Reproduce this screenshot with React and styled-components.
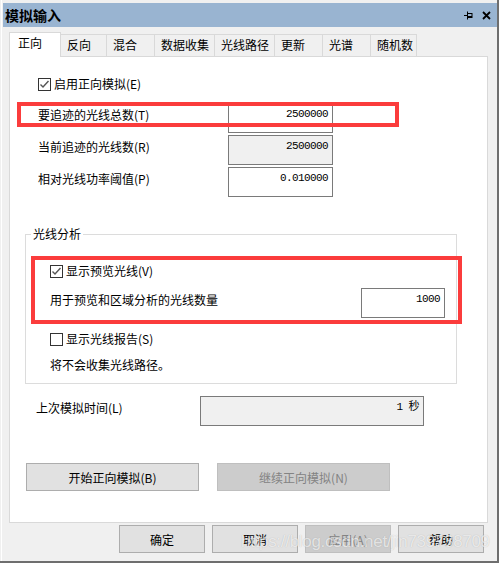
import React from 'react';
import styled, { createGlobalStyle } from 'styled-components';

const FONT = `"Noto Sans CJK SC", "Noto Sans", sans-serif`;
const MONO = `"Liberation Mono", "Noto Sans CJK SC", monospace`;

const Global = createGlobalStyle`
  html, body { margin: 0; padding: 0; background: #f0f0f0; }
  body { font-family: ${FONT}; font-size: 12px; color: #000; }
  * { box-sizing: border-box; }
`;

const Window = styled.div`
  position: relative;
  width: 499px;
  height: 563px;
  background: #f0f0f0;
  border-right: 2px solid #6e6e6e;
  border-bottom: 2px solid #6e6e6e;
  box-shadow: inset 1px 0 0 #f0f0f0, inset 2px 0 0 #ffffff;
  display: flex;
  flex-direction: column;
  overflow: hidden;
`;

const TitleBar = styled.div`
  margin: 3px 0 0 3px;
  height: 24px;
  background: #99b4d1;
  display: flex;
  align-items: center;
  justify-content: space-between;
  padding: 0 6px 0 2px;
`;

const Title = styled.div`
  font-size: 14px;
  font-weight: bold;
  line-height: 24px;
`;

const TitleIcons = styled.div`
  display: flex;
  align-items: center;
  gap: 9px;
`;

const TabRow = styled.div`
  margin: 5px 0 -1px 9px;
  height: 25px;
  display: flex;
  align-items: flex-end;
  position: relative;
  z-index: 1;
`;

const Tab = styled.div`
  position: relative;
  width: ${p => p.$w}px;
  height: ${p => (p.$active ? 25 : 22)}px;
  margin-bottom: ${p => (p.$active ? 0 : 1)}px;
  margin-left: ${p => (p.$first ? 0 : -1)}px;
  z-index: ${p => (p.$active ? 2 : 1)};
  border: 1px solid #d9d9d9;
  border-bottom: none;
  background: ${p => (p.$active ? '#ffffff' : '#f0f0f0')};
  padding-left: ${p => (p.$active ? 8 : 6)}px;
  font-size: 12px;
  line-height: 20px;
  white-space: nowrap;
`;

const Panel = styled.div`
  position: relative;
  margin: 0 9px;
  height: 467px;
  border: 1px solid #d9d9d9;
  background: #ffffff;
  display: flex;
  flex-direction: column;
  align-items: flex-start;
`;

const CheckRow = styled.div`
  display: flex;
  align-items: center;
  height: 14px;
  gap: 3px;
  margin-top: ${p => p.$mt}px;
  margin-left: ${p => p.$ml}px;
  line-height: 14px;
`;

const Box = styled.span`
  width: 13px;
  height: 13px;
  border: 1px solid #333333;
  background: #ffffff;
  display: inline-flex;
  align-items: center;
  justify-content: center;
`;

const FieldRow = styled.div`
  display: flex;
  align-items: flex-start;
  align-self: stretch;
  margin-top: ${p => p.$mt}px;
  padding-left: ${p => p.$ml}px;
  padding-right: ${p => p.$mr || 0}px;
`;

const Label = styled.div`
  width: ${p => (p.$w ? `${p.$w}px` : 'auto')};
  flex: ${p => (p.$w ? '0 0 auto' : '1 1 auto')};
  padding-top: 4px;
  line-height: 16px;
  white-space: nowrap;
`;

const Edit = styled.div`
  width: ${p => p.$w}px;
  height: 30px;
  border: 1px solid #7a7a7a;
  background: ${p => (p.$disabled ? '#f0f0f0' : '#ffffff')};
  text-align: right;
  padding: 3px 4px 0 0;
  font-family: ${MONO};
  font-size: 11px;
  letter-spacing: -0.6px;
  line-height: 14px;
  white-space: nowrap;
`;

const Group = styled.fieldset`
  margin: 29px 0 0 15px;
  padding: 0 0 11px 0;
  width: 432px;
  border: 1px solid #dcdcdc;
  min-inline-size: 0;
  display: flex;
  flex-direction: column;
  align-items: flex-start;
`;

const Legend = styled.legend`
  margin-left: 5px;
  padding: 0 2px;
  line-height: 16px;
  font-size: 12px;
`;

const Note = styled.div`
  margin-top: 12px;
  margin-left: 24px;
  line-height: 14px;
`;

const ButtonRow = styled.div`
  display: flex;
  gap: 18px;
  margin-top: 37px;
  margin-left: 16px;
`;

const Button = styled.div`
  width: ${p => p.$w}px;
  height: 28px;
  border: 1px solid ${p => (p.$disabled ? '#bfbfbf' : '#adadad')};
  background: ${p => (p.$disabled ? '#cccccc' : '#e1e1e1')};
  color: ${p => (p.$disabled ? '#838383' : '#000000')};
  display: flex;
  align-items: center;
  justify-content: center;
  font-size: 12px;
  white-space: nowrap;
`;

const Footer = styled.div`
  display: flex;
  justify-content: flex-end;
  gap: 7px;
  margin-top: 2px;
  padding-right: 13px;
`;

const Highlight = styled.div`
  position: absolute;
  left: ${p => p.$x}px;
  top: ${p => p.$y}px;
  width: ${p => p.$w}px;
  height: ${p => p.$h}px;
  border: 4px solid #fb3c3c;
  pointer-events: none;
`;

const Watermark = styled.div`
  position: absolute;
  left: 241px;
  top: 532px;
  font-family: "Liberation Sans", Arial, sans-serif;
  font-size: 17px;
  line-height: 20px;
  letter-spacing: -0.3px;
  color: rgba(255, 255, 255, 0.7);
  text-shadow: 0 0 1px rgba(0, 0, 0, 0.22);
  white-space: nowrap;
  pointer-events: none;
`;

const Check = ({ checked }) => (
  <Box>
    {checked && (
      <svg width="11" height="11" viewBox="0 0 11 11">
        <path d="M1.5 5.5 L4 8 L9.5 2" stroke="#555" strokeWidth="1.4" fill="none" />
      </svg>
    )}
  </Box>
);

const PinIcon = () => (
  <svg width="9" height="9" viewBox="0 0 9 9">
    <path d="M0 4.5 H3" stroke="#000" strokeWidth="1" />
    <path d="M3.5 0.5 V8.5" stroke="#000" strokeWidth="1" />
    <rect x="3.5" y="2.5" width="4.5" height="4" fill="none" stroke="#000" strokeWidth="1" />
    <path d="M4 5.5 H8" stroke="#000" strokeWidth="1" />
  </svg>
);

const CloseIcon = () => (
  <svg width="9" height="9" viewBox="0 0 9 9">
    <path d="M1 1 L8 8 M8 1 L1 8" stroke="#000" strokeWidth="1.8" />
  </svg>
);

const tabs = [
  { t: '正向', w: 52 },
  { t: '反向', w: 47 },
  { t: '混合', w: 49 },
  { t: '数据收集', w: 61 },
  { t: '光线路径', w: 61 },
  { t: '更新', w: 49 },
  { t: '光谱', w: 49 },
  { t: '随机数', w: 47 },
];

export default function App() {
  return (
    <>
      <Global />
      <Window>
        <TitleBar>
          <Title>模拟输入</Title>
          <TitleIcons>
            <PinIcon />
            <CloseIcon />
          </TitleIcons>
        </TitleBar>

        <TabRow>
          {tabs.map((tb, i) => (
            <Tab key={tb.t} $w={tb.w} $active={i === 0} $first={i === 0}>
              {tb.t}
            </Tab>
          ))}
        </TabRow>

        <Panel>
          <CheckRow $mt={20} $ml={28}>
            <Check checked />
            <span>启用正向模拟(E)</span>
          </CheckRow>

          <FieldRow $mt={12} $ml={28}>
            <Label $w={190}>要追迹的光线总数(T)</Label>
            <Edit $w={105}>2500000</Edit>
          </FieldRow>
          <FieldRow $mt={2} $ml={28}>
            <Label $w={190}>当前追迹的光线数(R)</Label>
            <Edit $w={105} $disabled>2500000</Edit>
          </FieldRow>
          <FieldRow $mt={2} $ml={28}>
            <Label $w={190}>相对光线功率阈值(P)</Label>
            <Edit $w={105}>0.010000</Edit>
          </FieldRow>

          <Group>
            <Legend>光线分析</Legend>
            <CheckRow $mt={22} $ml={24}>
              <Check checked />
              <span>显示预览光线(V)</span>
            </CheckRow>
            <FieldRow $mt={10} $ml={24} $mr={11}>
              <Label>用于预览和区域分析的光线数量</Label>
              <Edit $w={84}>1000</Edit>
            </FieldRow>
            <CheckRow $mt={14} $ml={24}>
              <Check />
              <span>显示光线报告(S)</span>
            </CheckRow>
            <Note>将不会收集光线路径。</Note>
          </Group>

          <FieldRow $mt={12} $ml={26}>
            <Label $w={164}>上次模拟时间(L)</Label>
            <Edit $w={224} $disabled>1 秒</Edit>
          </FieldRow>

          <ButtonRow>
            <Button $w={173}>开始正向模拟(B)</Button>
            <Button $w={173} $disabled>继续正向模拟(N)</Button>
          </ButtonRow>

          <Highlight $x={7} $y={45} $w={382} $h={25} />
          <Highlight $x={21} $y={199} $w={431} $h={68} />
        </Panel>

        <Footer>
          <Button $w={86}>确定</Button>
          <Button $w={86}>取消</Button>
          <Button $w={86} $disabled>应用(A)</Button>
          <Button $w={86}>帮助</Button>
        </Footer>

        <Watermark>https://blog.csdn.net/jin739738709</Watermark>
      </Window>
    </>
  );
}
